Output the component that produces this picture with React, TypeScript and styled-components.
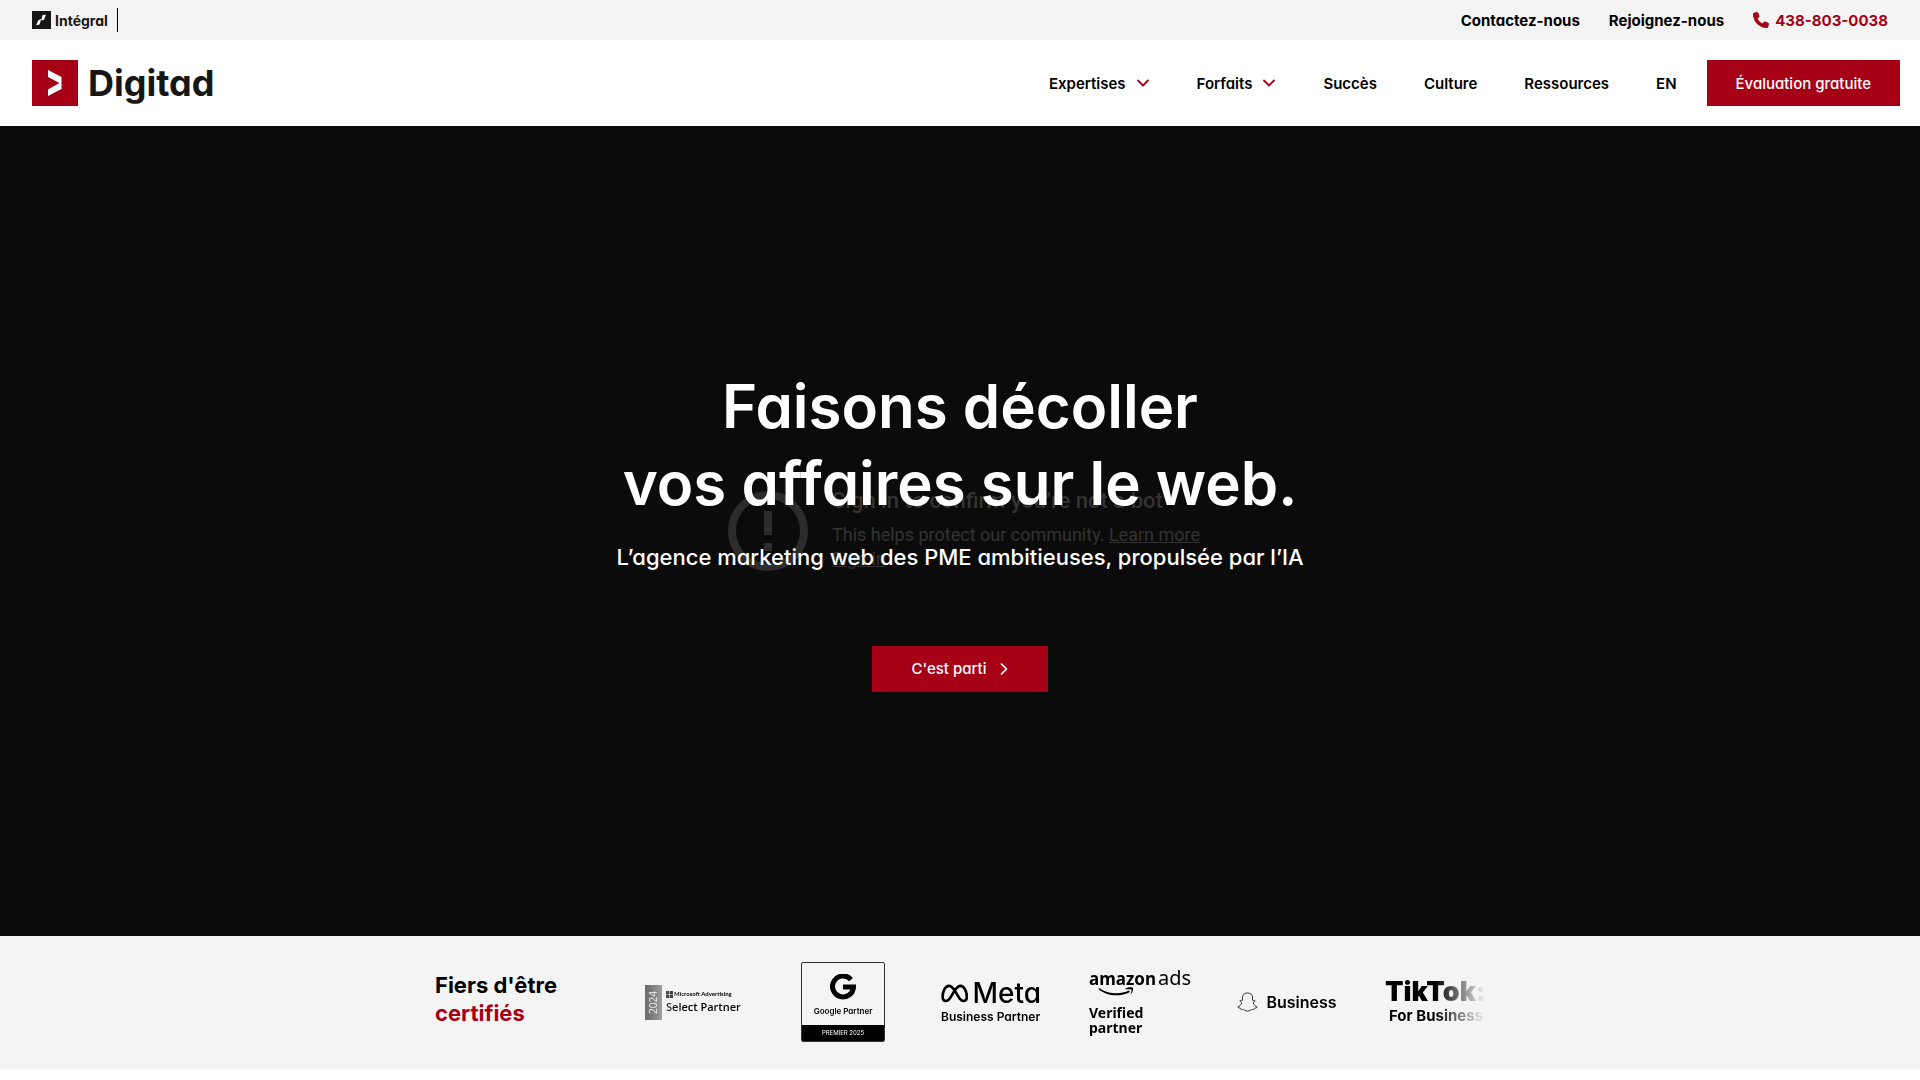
import React from "react";
import styled, { createGlobalStyle, css } from "styled-components";

const RED = "#a50016";
const GREY = "#f4f4f4";
const NIGHT = "#0b0b0b";

const GlobalStyle = createGlobalStyle`
  *, *::before, *::after { box-sizing: border-box; }
  body {
    margin: 0;
    background: #fff;
    color: #000;
    font-family: Inter, "Liberation Sans", sans-serif;
    font-feature-settings: "cv11" 1;
    font-size: 16px;
  }
  a { color: inherit; text-decoration: none; }
  button { font: inherit; font-feature-settings: inherit; color: inherit; border: 0; background: none; padding: 0; cursor: pointer; }
  h1, h2, p { margin: 0; }
`;

const TopBar = styled.div`
  display: flex;
  align-items: center;
  justify-content: space-between;
  height: 40px;
  padding: 0 32px;
  background: ${GREY};
`;

const SisterBrand = styled.a`
  display: flex;
  align-items: center;
  gap: 4px;
  height: 24px;
  padding-right: 9px;
  border-right: 1px solid #000;
  color: #161615;
  font-size: 14px;
  font-weight: 700;
`;

const TopLinks = styled.nav`
  display: flex;
  align-items: center;
  gap: 29px;
  font-size: 15px;
  font-weight: 700;
`;

const PhoneLink = styled.a`
  display: flex;
  align-items: center;
  gap: 6px;
  color: ${RED};
`;

const Header = styled.header`
  display: flex;
  align-items: center;
  justify-content: space-between;
  height: 86px;
  padding: 0 20px 0 32px;
  background: #fff;
`;

const Brand = styled.a`
  display: flex;
  align-items: center;
  gap: 10px;
  color: #161615;
  font-size: 36px;
  font-weight: 700;
  line-height: 46px;
`;

const NavGroup = styled.div`
  display: flex;
  align-items: center;
  gap: 30px;
`;

const MainNav = styled.nav`
  display: flex;
  align-items: center;
  gap: 47px;
  font-size: 15px;
  font-weight: 600;
`;

const NavToggle = styled.button`
  display: flex;
  align-items: center;
  gap: 10px;
`;

const Cta = styled.a<{ $wide?: boolean }>`
  position: relative;
  display: flex;
  align-items: center;
  justify-content: center;
  gap: 14px;
  height: 46px;
  padding: 0 ${(p) => (p.$wide ? 40 : 29)}px;
  background: ${RED};
  color: #fff;
  font-size: 15px;
  font-weight: 500;
`;

const Hero = styled.main`
  position: relative;
  display: flex;
  flex-direction: column;
  align-items: center;
  justify-content: center;
  min-height: 75vh;
  padding-bottom: 3px;
  background: ${NIGHT};
  color: #fff;
  text-align: center;
`;

const Headline = styled.h1`
  position: relative;
  font-size: 60px;
  font-weight: 600;
  line-height: 77px;
`;

const Tagline = styled.p`
  position: relative;
  margin: 20px 0 73px;
  font-size: 22px;
  font-weight: 500;
  line-height: 31px;
`;

const VideoNotice = styled.div`
  position: absolute;
  inset: 0;
  display: flex;
  align-items: center;
  justify-content: center;
  gap: 24px;
  padding-left: 8px;
  color: #333;
  font-family: Roboto, sans-serif;
  text-align: left;
`;

const NoticeText = styled.div`
  padding-bottom: 4px;
  font-size: 18px;
  line-height: 24px;
  a { text-decoration: underline; }
`;

const NoticeTitle = styled.p`
  margin-bottom: 8px;
  font-size: 22px;
  font-weight: 500;
  line-height: 28px;
`;

const Certs = styled.section`
  display: flex;
  align-items: center;
  justify-content: center;
  gap: 80px;
  padding: 26px 24px 27px;
  background: ${GREY};
`;

const CertsTitle = styled.h2`
  width: 120px;
  padding-bottom: 6px;
  font-size: 22px;
  font-weight: 700;
  line-height: 28px;
  white-space: nowrap;
  em { display: block; color: ${RED}; font-style: normal; }
`;

const Track = styled.ul`
  display: flex;
  align-items: center;
  gap: 48px;
  margin: 0;
  padding: 0 0 0 10px;
  list-style: none;
  overflow: hidden;
  mask-image: linear-gradient(to right, rgba(0, 0, 0, 0.5), #000 50px, #000 calc(100% - 50px), transparent);
`;

const Slide = styled.li`
  display: flex;
  flex: none;
  align-items: center;
  justify-content: center;
  width: 100px;
  height: 80px;
  white-space: nowrap;
`;

const stack = css`
  display: flex;
  flex-direction: column;
`;

const Microsoft = styled.div`
  display: flex;
  align-items: center;
  gap: 4px;
  width: 100px;
`;
const Year = styled.span`
  width: 17px;
  height: 35px;
  background: linear-gradient(to left, #111, #888);
  color: #f3f3f3;
  font-family: "Open Sans", sans-serif;
  font-size: 10px;
  line-height: 17px;
  text-align: center;
  writing-mode: vertical-rl;
  rotate: 180deg;
`;
const MicrosoftText = styled.div`
  ${stack}
  gap: 2px;
  font-family: "Open Sans", sans-serif;
  font-size: 11px;
  font-weight: 600;
  line-height: 14px;
`;
const MicrosoftLine = styled.span`
  display: flex;
  align-items: center;
  gap: 1px;
  font-family: Lato, sans-serif;
  font-size: 6px;
  font-weight: 700;
  line-height: 8px;
`;

const Google = styled.div`
  ${stack}
  align-items: center;
  width: 84px;
  height: 80px;
  border: 1px solid #333;
  border-radius: 2px;
  overflow: hidden;
  font-size: 8px;
  font-weight: 600;
  line-height: 12px;
  svg { margin: 11px 0 5px; }
`;
const GoogleBadge = styled.span`
  width: 100%;
  margin-top: auto;
  background: #000;
  color: #fff;
  font-size: 6px;
  font-weight: 400;
  line-height: 16px;
  text-align: center;
`;

const Meta = styled.div`
  ${stack}
  width: 100px;
  font-size: 12px;
  font-weight: 600;
  line-height: 18px;
`;
const MetaName = styled.span`
  display: flex;
  align-items: center;
  gap: 4px;
  font-size: 28px;
  font-weight: 500;
  line-height: 30px;
`;

const Amazon = styled.div`
  ${stack}
  width: 100px;
  padding-bottom: 3px;
  font-family: "Noto Sans", sans-serif;
  font-size: 14px;
  font-weight: 700;
  line-height: 15px;
  svg { margin: -4px 0 8px 9px; }
`;
const AmazonName = styled.span`
  font-size: 17px;
  line-height: 24px;
  span { margin-left: 2px; font-size: 20px; font-weight: 400; }
`;

const Snap = styled.div`
  display: flex;
  align-items: center;
  gap: 8px;
  font-size: 16px;
  font-weight: 600;
`;

const TikTok = styled.div`
  ${stack}
  width: 100px;
  font-size: 15px;
  font-weight: 700;
  line-height: 20px;
  span { padding-left: 4px; }
`;
const TikTokName = styled.strong`
  font-size: 27px;
  font-weight: 900;
  line-height: 28px;
`;

const Chevron = () => (
  <svg width="14" height="8" viewBox="0 0 14 8" fill="none" stroke={RED} strokeWidth="1.8" strokeLinecap="round" strokeLinejoin="round" aria-hidden>
    <path d="M2 1.500 7 6.500 12 1.500" />
  </svg>
);

export default function App() {
  return (
    <>
      <GlobalStyle />
      <TopBar>
        <SisterBrand href="#integral">
          <svg width="19" height="18" viewBox="0 0 19 18" aria-hidden>
            <path fill="#161615" d="M0 0h19v18H0z" />
            <path fill="#fff" d="M10.500 4.200 14 3.600 12.200 8.400 9.200 9.800ZM6.200 9.400 9.200 7.800 7.600 13.400 4 14.200Z" />
          </svg>
          Intégral
        </SisterBrand>
        <TopLinks>
          <a href="#contact">Contactez-nous</a>
          <a href="#jobs">Rejoignez-nous</a>
          <PhoneLink href="tel:4388030038">
            <svg width="16" height="16" viewBox="0 0 512 512" fill={RED} aria-hidden>
              <path d="M164.900 24.600c-7.700-18.600-28-28.500-47.400-23.200l-88 24C12.100 30.200 0 46 0 64c0 247.400 200.600 448 448 448 18 0 33.800-12.100 38.600-29.500l24-88c5.300-19.400-4.600-39.700-23.200-47.400l-96-40c-16.300-6.800-35.200-2.100-46.300 11.600L304.700 368C234.300 334.700 177.300 277.700 144 207.300l49.300-40.300c13.700-11.200 18.400-30 11.600-46.300l-40-96z" />
            </svg>
            438-803-0038
          </PhoneLink>
        </TopLinks>
      </TopBar>
      <Header>
        <Brand href="#home">
          <svg width="46" height="46" viewBox="0 0 46 46" aria-hidden>
            <path fill={RED} d="M0 0h46v46H0z" />
            <path fill="#fff" d="M16 10 29.500 17V29L16 36V29.500L27.500 23 16 17Z" />
          </svg>
          Digitad
        </Brand>
        <NavGroup>
          <MainNav>
            <NavToggle type="button">Expertises <Chevron /></NavToggle>
            <NavToggle type="button">Forfaits <Chevron /></NavToggle>
            <a href="#succes">Succès</a>
            <a href="#culture">Culture</a>
            <a href="#ressources">Ressources</a>
            <a href="#en">EN</a>
          </MainNav>
          <Cta href="#evaluation">Évaluation gratuite</Cta>
        </NavGroup>
      </Header>
      <Hero>
        <VideoNotice>
          <svg width="80" height="80" viewBox="0 0 80 80" aria-hidden>
            <circle cx="40" cy="40" r="36" fill="none" stroke="#2c2c2c" strokeWidth="8" />
            <path fill="#2c2c2c" d="M36 20h8v24h-8zM36 52h8v8h-8z" />
          </svg>
          <NoticeText>
            <NoticeTitle>Sign in to confirm you’re not a bot</NoticeTitle>
            <p>This helps protect our community. <a href="#learn">Learn more</a></p>
            <p><a href="#signin">Sign in</a></p>
          </NoticeText>
        </VideoNotice>
        <Headline>Faisons décoller<br />vos affaires sur le web.</Headline>
        <Tagline>L’agence marketing web des PME ambitieuses, propulsée par l’IA</Tagline>
        <Cta $wide href="#start">
          C'est parti
          <svg width="8" height="12" viewBox="0 0 8 12" fill="none" stroke="#fff" strokeWidth="1.700" strokeLinecap="round" strokeLinejoin="round" aria-hidden>
            <path d="M1.500 1 6.500 6 1.500 11" />
          </svg>
        </Cta>
      </Hero>
      <Certs>
        <CertsTitle>Fiers d'être <em>certifiés</em></CertsTitle>
        <Track>
          <Slide>
            <Microsoft>
              <Year>2024</Year>
              <MicrosoftText>
                <MicrosoftLine>
                  <svg width="7" height="7" viewBox="0 0 7 7" aria-hidden><path fill="#222" d="M0 0h3.200v3.200H0zM3.800 0H7v3.200H3.800zM0 3.800h3.200V7H0zM3.800 3.800H7V7H3.800z" /></svg>
                  Microsoft Advertising
                </MicrosoftLine>
                Select Partner
              </MicrosoftText>
            </Microsoft>
          </Slide>
          <Slide>
            <Google>
              <svg width="26" height="26" viewBox="0 0 26 26" fill="none" stroke="#000" strokeWidth="5" aria-hidden>
                <path d="M21 5.600A10.500 10.500 0 1 0 23.500 13H13" />
              </svg>
              Google Partner
              <GoogleBadge>PREMIER 2025</GoogleBadge>
            </Google>
          </Slide>
          <Slide>
            <Meta>
              <MetaName>
                <svg width="31" height="21" viewBox="0 0 31 21" fill="none" stroke="#000" strokeWidth="3" aria-hidden>
                  <path d="M15.500 7C13 3.500 11.500 1.800 9 1.800 4.800 1.800 1.800 8.500 1.800 14c0 3.300 1.400 5 3.700 5 3 0 4.500-2.500 10-12C18 3.500 19.500 1.800 22 1.800c4.200 0 7.200 6.700 7.200 12.200 0 3.300-1.400 5-3.700 5-3 0-4.500-2.500-10-12Z" />
                </svg>
                Meta
              </MetaName>
              Business Partner
            </Meta>
          </Slide>
          <Slide>
            <Amazon>
              <AmazonName>amazon<span>ads</span></AmazonName>
              <svg width="36" height="10" viewBox="0 0 36 10" aria-hidden>
                <path fill="#000" d="M1 1C9 7 22 8 31 3.500L32 5C22 10.500 8 9 .5 2ZM27.500 1.500C30 .2 34 0 35 1c.6 1.400-.4 4.600-2.400 6.400C33.200 5.500 34 3.500 33.300 2.600 32.600 2 29.500 2.200 27.500 2.400Z" />
              </svg>
              <span>Verified<br />partner</span>
            </Amazon>
          </Slide>
          <Slide>
            <Snap>
              <svg width="21" height="20" viewBox="0 0 21 20" fill="none" stroke="#333" strokeWidth="1" strokeLinejoin="round" aria-hidden>
                <path d="M10.500 1C7 1 5.400 3.200 5.400 6v2.300C4.500 8.800 3 8 2.800 8.800c0 .9 2.200 1 2 2.200C4 13 2.500 14.500.8 15c.2 1 2 1 2.600 1.300.3.600.2 1 .8 1.200 1 0 2-.3 3.200.6 2 1.300 4.200 1.300 6.200 0 1.200-.9 2.200-.6 3.200-.6.600-.2.500-.6.800-1.200.6-.3 2.400-.3 2.600-1.300-1.700-.5-3.200-2-4-4-.2-1.200 2-1.300 2-2.200-.2-.8-1.700 0-2.600-.5V6c0-2.800-1.600-5-5.100-5Z" />
              </svg>
              Business
            </Snap>
          </Slide>
          <Slide>
            <TikTok>
              <TikTokName>TikTok:</TikTokName>
              <span>For Business</span>
            </TikTok>
          </Slide>
        </Track>
      </Certs>
    </>
  );
}
